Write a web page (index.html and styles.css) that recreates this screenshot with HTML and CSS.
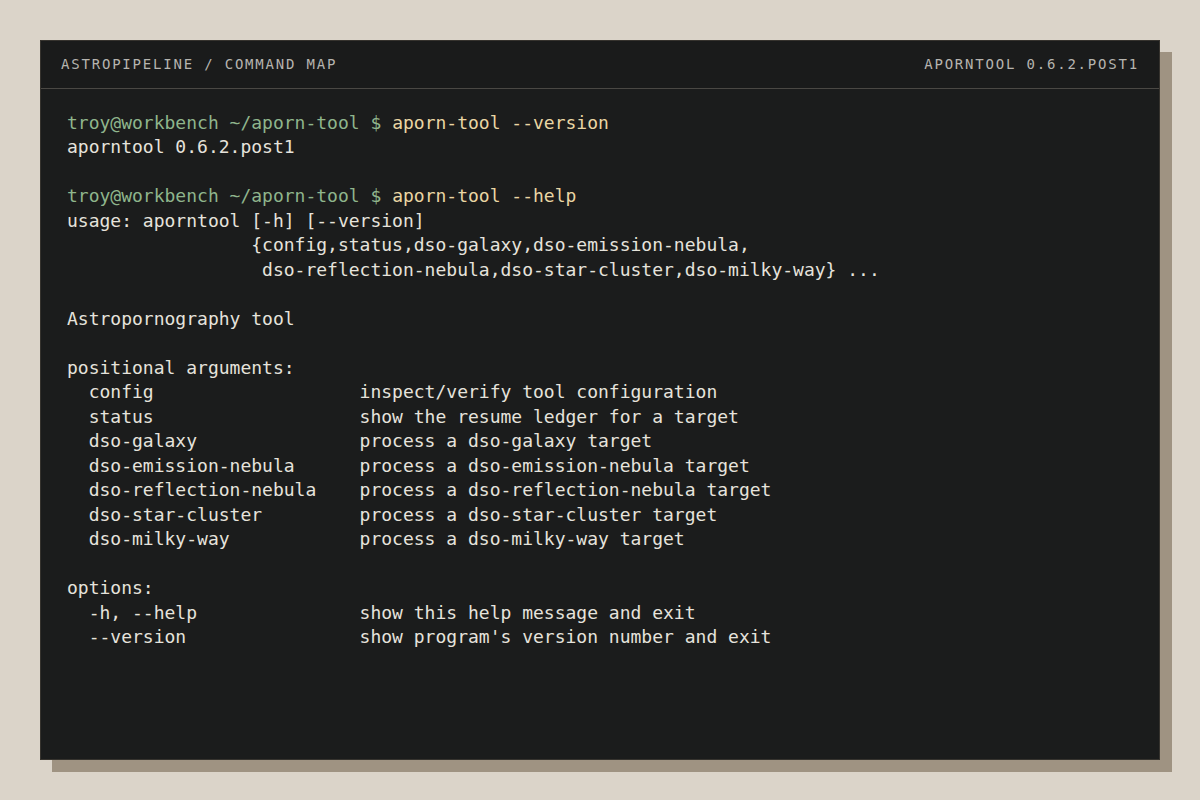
FILE: index.html
```html
<!DOCTYPE html>
<html lang="en">
<head>
<meta charset="utf-8">
<title>Command map</title>
<link rel="stylesheet" href="styles.css">
</head>
<body>
<div class="stage">
  <div class="window">
    <header class="bar">
      <span class="bar-title">Astropipeline / Command map</span>
      <span class="bar-version">aporntool 0.6.2.post1</span>
    </header>
    <pre class="term"><span class="prompt">troy@workbench ~/aporn-tool $</span> <span class="cmd">aporn-tool --version</span>
aporntool 0.6.2.post1

<span class="prompt">troy@workbench ~/aporn-tool $</span> <span class="cmd">aporn-tool --help</span>
usage: aporntool [-h] [--version]
                 {config,status,dso-galaxy,dso-emission-nebula,
                  dso-reflection-nebula,dso-star-cluster,dso-milky-way} ...

Astropornography tool

positional arguments:
  config                   inspect/verify tool configuration
  status                   show the resume ledger for a target
  dso-galaxy               process a dso-galaxy target
  dso-emission-nebula      process a dso-emission-nebula target
  dso-reflection-nebula    process a dso-reflection-nebula target
  dso-star-cluster         process a dso-star-cluster target
  dso-milky-way            process a dso-milky-way target

options:
  -h, --help               show this help message and exit
  --version                show program's version number and exit</pre>
  </div>
</div>
</body>
</html>
```

FILE: styles.css
```css
html, body {
  margin: 0;
  padding: 0;
}

body {
  background: #dbd4c9;
  width: 1200px;
  height: 800px;
  overflow: hidden;
}

.stage {
  padding: 40px;
}

.window {
  box-sizing: border-box;
  width: 1120px;
  height: 720px;
  background: #1b1c1c;
  border: 1px solid #36332e;
  box-shadow: 12px 12px 0 #9f9382;
  display: flex;
  flex-direction: column;
}

.bar {
  box-sizing: border-box;
  height: 48px;
  border-bottom: 1px solid #4a4844;
  background: #1a1b1b;
  display: flex;
  align-items: center;
  justify-content: space-between;
  padding: 0 20px 2px 20px;
  font-family: "DejaVu Sans Mono", monospace;
  font-size: 14px;
  letter-spacing: 1.8px;
  text-transform: uppercase;
  color: #b6b4af;
}

.term {
  margin: 0;
  padding: 22px 26px;
  font-family: "DejaVu Sans Mono", monospace;
  font-size: 18px;
  line-height: 24.48px;
  color: #e6e3dc;
  white-space: pre;
}

.prompt {
  color: #8fb58c;
}

.cmd {
  color: #ead6a4;
}
```
